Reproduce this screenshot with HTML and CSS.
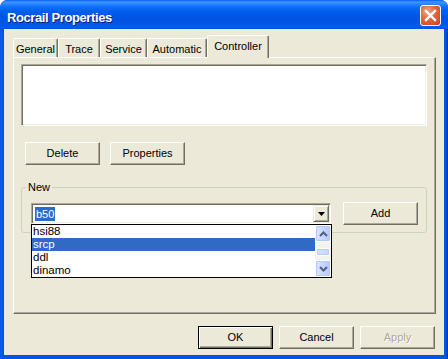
FILE: index.html
```html
<!DOCTYPE html>
<html>
<head>
<meta charset="utf-8">
<link rel="stylesheet" href="styles.css">
</head>
<body>
<div class="window">
  <div class="titlebar">
    <span class="title">Rocrail Properties</span>
    <span class="close">
      <svg width="13" height="13" viewBox="0 0 13 13"><path d="M2 2 L11 11 M11 2 L2 11" stroke="#fff" stroke-width="2.4" stroke-linecap="square"/></svg>
    </span>
  </div>
  <div class="client">
    <div class="tabs">
      <div class="tab w-general">General</div>
      <div class="tab w-trace">Trace</div>
      <div class="tab w-service">Service</div>
      <div class="tab w-auto">Automatic</div>
      <div class="tab active w-ctrl">Controller</div>
    </div>
    <div class="panel">
      <div class="listbox"></div>
      <div class="btnrow">
        <div class="btn">Delete</div>
        <div class="btn">Properties</div>
      </div>
      <fieldset class="group">
        <legend>New</legend>
        <div class="grouprow">
          <div class="combo">
            <span class="combo-text"><span class="sel">b50</span></span>
            <span class="combo-btn"><svg width="7" height="4" viewBox="0 0 7 4"><path d="M0 0 H7 L3.5 4 Z" fill="#000"/></svg></span>
          </div>
          <div class="btn">Add</div>
        </div>
      </fieldset>
    </div>
    <div class="footer">
      <div class="btn default">OK</div>
      <div class="btn">Cancel</div>
      <div class="btn disabled">Apply</div>
    </div>
  </div>
  <div class="dropdown">
    <div class="items">
      <div class="item">hsi88</div>
      <div class="item hl">srcp</div>
      <div class="item">ddl</div>
      <div class="item">dinamo</div>
    </div>
    <div class="vscroll">
      <div class="sbtn"><svg width="9" height="6" viewBox="0 0 9 6"><path d="M1 5 L4.5 1.5 L8 5" fill="none" stroke="#4D6185" stroke-width="2"/></svg></div>
      <div class="track"><div class="thumb"></div></div>
      <div class="sbtn"><svg width="9" height="6" viewBox="0 0 9 6"><path d="M1 1 L4.5 4.5 L8 1" fill="none" stroke="#4D6185" stroke-width="2"/></svg></div>
    </div>
  </div>
</div>
</body>
</html>
```

FILE: styles.css
```css
html, body {
  margin: 0;
  padding: 0;
  background: #ffffff;
}
body {
  font-family: "Liberation Sans", Arial, sans-serif;
  font-size: 11px;
  color: #000;
}
.window {
  position: relative;
  width: 448px;
  height: 359px;
  box-sizing: border-box;
  background: linear-gradient(to right, #0842D0 0, #166AEE 1px, #0055E5 2px, #0055E5 446px, #0035BF 447px);
  border-radius: 7px 7px 0 0;
  display: flex;
  flex-direction: column;
  overflow: hidden;
}
.titlebar {
  height: 29px;
  flex: none;
  display: flex;
  align-items: center;
  justify-content: space-between;
  padding: 0 7px 0 7px;
  box-sizing: border-box;
  background: linear-gradient(to bottom, #0A5FF0 0, #3D95FF 2px, #2A86FF 4px, #0F6EF9 7px, #0060EE 11px, #0056E4 16px, #0054E3 21px, #0058EA 25px, #005EF3 27px, #004FD6 29px);
  border-radius: 7px 7px 0 0;
}
.title {
  color: #fff;
  font-weight: bold;
  font-size: 13px;
  letter-spacing: -0.4px;
  text-shadow: 1px 1px 0 #0A1D7F;
  margin-top: 5px;
}
.close {
  width: 21px;
  height: 21px;
  box-sizing: border-box;
  border: 1px solid #fff;
  border-radius: 3px;
  background: radial-gradient(circle at 35% 30%, #F0A58A 0, #E2653F 45%, #C93F1B 100%);
  display: flex;
  align-items: center;
  justify-content: center;
  margin-top: 2px;
  margin-right: 0;
}
.client {
  flex: 1;
  margin: 0 4px 4px 4px;
  background: #ECE9D8;
  padding-top: 6px;
  display: flex;
  flex-direction: column;
}
.tabs {
  height: 22px;
  display: flex;
  align-items: flex-end;
  padding-left: 9px;
  position: relative;
  z-index: 2;
}
.tab {
  height: 19px;
  box-sizing: border-box;
  border-top: 1px solid #fff;
  border-left: 1px solid #fff;
  border-right: 1px solid #716F64;
  box-shadow: inset -1px 0 #ACA899;
  border-radius: 2px 2px 0 0;
  display: flex;
  align-items: center;
  justify-content: center;
  padding-top: 2px;
  background: #ECE9D8;
}
.tab.active {
  height: 23px;
  margin-bottom: -1px;
  padding-top: 0;
  padding-bottom: 3px;
}
.w-general { width: 45px; }
.w-trace { width: 42px; }
.w-service { width: 47px; }
.w-auto { width: 60px; }
.w-ctrl { width: 62px; }
.panel {
  margin-left: 9px;
  width: 423px;
  height: 257px;
  box-sizing: border-box;
  border: 1px solid;
  border-color: #fff #716F64 #716F64 #fff;
  box-shadow: inset -1px -1px #ACA899;
  padding: 6px 8px 0 7px;
  display: flex;
  flex-direction: column;
}
.listbox {
  height: 62px;
  box-sizing: border-box;
  background: #fff;
  border: 1px solid;
  border-color: #ACA899 #fff #fff #ACA899;
  box-shadow: inset 1px 1px #716F64, inset -1px -1px #F1EFE2;
}
.btnrow {
  display: flex;
  gap: 10px;
  margin-top: 16px;
  padding-left: 4px;
}
.btn {
  width: 75px;
  height: 23px;
  box-sizing: border-box;
  background: #ECE9D8;
  border: 1px solid;
  border-color: #fff #716F64 #716F64 #fff;
  box-shadow: inset -1px -1px #ACA899;
  display: flex;
  align-items: center;
  justify-content: center;
  padding-bottom: 1px;
}
.btn.default {
  border: 1px solid #000;
  box-shadow: inset 1px 1px #fff, inset -1px -1px #716F64, inset -2px -2px #ACA899;
}
.btn.disabled {
  color: #ACA899;
  text-shadow: 1px 1px 0 #fff;
}
.group {
  margin: 16px 0 0 0;
  padding: 0 8px 7px 9px;
  border: 1px solid #D0D0BF;
  border-radius: 3px;
  min-width: 0;
}
.group legend {
  padding: 0 2px;
  margin-left: -5px;
  line-height: 13px;
  color: #000;
}
.grouprow {
  display: flex;
  align-items: center;
  gap: 12px;
  margin-top: 8px;
}
.combo {
  width: 300px;
  height: 21px;
  box-sizing: border-box;
  background: #fff;
  border: 1px solid;
  border-color: #ACA899 #fff #fff #ACA899;
  box-shadow: inset 1px 1px #716F64, inset -1px -1px #F1EFE2;
  display: flex;
  align-items: center;
  padding: 2px 2px 2px 2px;
}
.combo-text {
  flex: 1;
  padding-left: 1px;
}
.sel {
  background: #316AC5;
  color: #fff;
  line-height: 14px;
  display: inline-block;
  padding: 0 1px;
}
.combo-btn {
  width: 16px;
  height: 17px;
  margin-right: -1px;
  box-sizing: border-box;
  background: #ECE9D8;
  border: 1px solid;
  border-color: #ECE9D8 #716F64 #716F64 #ECE9D8;
  box-shadow: inset 1px 1px #fff, inset -1px -1px #ACA899;
  display: flex;
  align-items: center;
  justify-content: center;
}
.footer {
  display: flex;
  justify-content: flex-end;
  gap: 6px;
  padding-right: 9px;
  margin-top: 12px;
}
.dropdown {
  position: absolute;
  left: 31px;
  top: 224px;
  width: 301px;
  height: 54px;
  box-sizing: border-box;
  border: 1px solid #000;
  background: #fff;
  display: flex;
  z-index: 5;
}
.items {
  flex: 1;
}
.item {
  height: 13px;
  line-height: 13px;
  padding-left: 1px;
  font-size: 11.5px;
}
.item.hl {
  background: #316AC5;
  color: #fff;
}
.vscroll {
  width: 16px;
  display: flex;
  flex-direction: column;
  background: #F4F3EE;
}
.sbtn {
  height: 17px;
  box-sizing: border-box;
  border: 1px solid #fff;
  border-radius: 2px;
  background: linear-gradient(to right, #DCE6FD, #C2D3FC 60%, #B6C8F7);
  box-shadow: inset 0 0 0 1px #B7CAF5;
  display: flex;
  align-items: center;
  justify-content: center;
}
.track {
  flex: 1;
  display: flex;
  align-items: center;
  justify-content: center;
  padding-top: 2px;
}
.thumb {
  width: 14px;
  height: 8px;
  box-sizing: border-box;
  border: 1px solid #fff;
  border-radius: 2px;
  background: linear-gradient(to right, #D6E2FD, #C4D4FB);
  box-shadow: inset 0 0 0 1px #B7CAF5;
}
```
